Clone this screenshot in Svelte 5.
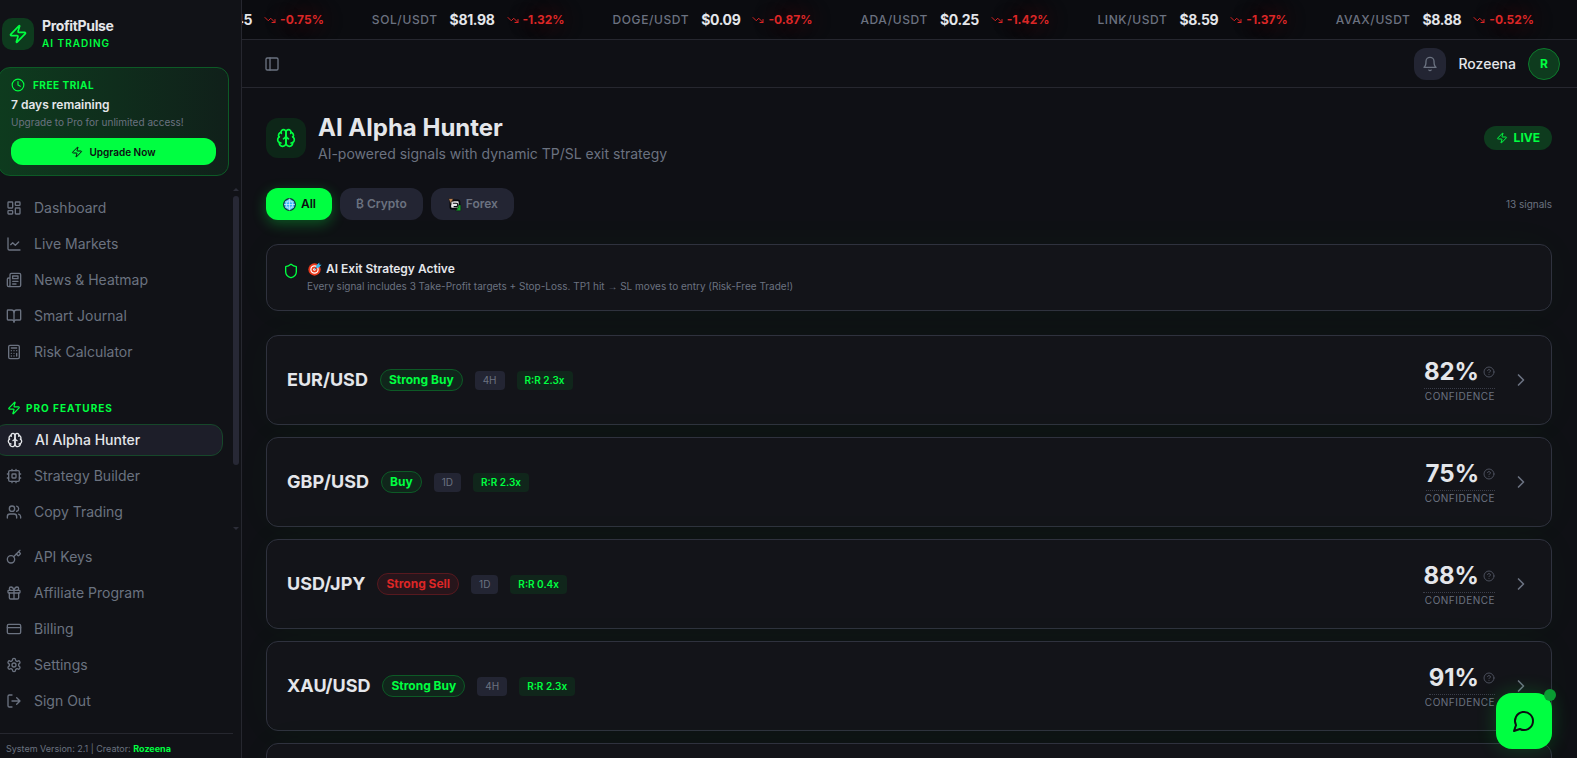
<script>
  const icons = {
    zap: '<path d="M4 14a1 1 0 0 1-.78-1.63l9.9-10.2a.5.5 0 0 1 .86.46l-1.92 6.02A1 1 0 0 0 13 10h7a1 1 0 0 1 .78 1.63l-9.9 10.2a.5.5 0 0 1-.86-.46l1.92-6.02A1 1 0 0 0 11 14z"/>',
    clock: '<circle cx="12" cy="12" r="10"/><path d="M12 6v6l4 2"/>',
    dashboard: '<rect width="7" height="9" x="3" y="3" rx="1"/><rect width="7" height="5" x="14" y="3" rx="1"/><rect width="7" height="9" x="14" y="12" rx="1"/><rect width="7" height="5" x="3" y="16" rx="1"/>',
    chart: '<path d="M3 3v16a2 2 0 0 0 2 2h16"/><path d="m19 9-5 5-4-4-3 3"/>',
    news: '<path d="M4 22h16a2 2 0 0 0 2-2V4a2 2 0 0 0-2-2H8a2 2 0 0 0-2 2v16a2 2 0 0 1-2 2Zm0 0a2 2 0 0 1-2-2v-9c0-1.1.9-2 2-2h2"/><path d="M18 14h-8"/><path d="M15 18h-5"/><path d="M10 6h8v4h-8V6Z"/>',
    book: '<path d="M12 7v14"/><path d="M3 18a1 1 0 0 1-1-1V4a1 1 0 0 1 1-1h5a4 4 0 0 1 4 4 4 4 0 0 1 4-4h5a1 1 0 0 1 1 1v13a1 1 0 0 1-1 1h-6a3 3 0 0 0-3 3 3 3 0 0 0-3-3z"/>',
    calc: '<rect width="16" height="20" x="4" y="2" rx="2"/><path d="M8 6h8M16 14v4M16 10h.01M12 10h.01M8 10h.01M12 14h.01M8 14h.01M12 18h.01M8 18h.01"/>',
    brain: '<path d="M12 5a3 3 0 1 0-5.997.125 4 4 0 0 0-2.526 5.77 4 4 0 0 0 .556 6.588A4 4 0 1 0 12 18Z"/><path d="M12 5a3 3 0 1 1 5.997.125 4 4 0 0 1 2.526 5.77 4 4 0 0 1-.556 6.588A4 4 0 1 1 12 18Z"/><path d="M15 13a4.5 4.5 0 0 1-3-4 4.5 4.5 0 0 1-3 4"/><path d="M17.599 6.5a3 3 0 0 0 .399-1.375M6.003 5.125A3 3 0 0 0 6.401 6.5M3.477 10.896a4 4 0 0 1 .585-.396M19.938 10.5a4 4 0 0 1 .585.396M6 18a4 4 0 0 1-1.967-.516M19.967 17.484A4 4 0 0 1 18 18"/>',
    cpu: '<rect width="16" height="16" x="4" y="4" rx="2"/><rect width="6" height="6" x="9" y="9" rx="1"/><path d="M15 2v2M15 20v2M2 15h2M2 9h2M20 15h2M20 9h2M9 2v2M9 20v2"/>',
    users: '<path d="M16 21v-2a4 4 0 0 0-4-4H6a4 4 0 0 0-4 4v2"/><circle cx="9" cy="7" r="4"/><path d="M22 21v-2a4 4 0 0 0-3-3.87M16 3.13a4 4 0 0 1 0 7.75"/>',
    key: '<path d="m15.5 7.5 2.3 2.3a1 1 0 0 0 1.4 0l2.1-2.1a1 1 0 0 0 0-1.4L19 4"/><path d="m21 2-9.6 9.6"/><circle cx="7.5" cy="15.5" r="5.5"/>',
    gift: '<rect x="3" y="8" width="18" height="4" rx="1"/><path d="M12 8v13M19 12v7a2 2 0 0 1-2 2H7a2 2 0 0 1-2-2v-7"/><path d="M7.5 8a2.5 2.5 0 0 1 0-5A4.8 8 0 0 1 12 8a4.8 8 0 0 1 4.5-5 2.5 2.5 0 0 1 0 5"/>',
    card: '<rect width="20" height="14" x="2" y="5" rx="2"/><path d="M2 10h20"/>',
    settings: '<path d="M12.22 2h-.44a2 2 0 0 0-2 2v.18a2 2 0 0 1-1 1.73l-.43.25a2 2 0 0 1-2 0l-.15-.08a2 2 0 0 0-2.73.73l-.22.38a2 2 0 0 0 .73 2.73l.15.1a2 2 0 0 1 1 1.72v.51a2 2 0 0 1-1 1.74l-.15.09a2 2 0 0 0-.73 2.73l.22.38a2 2 0 0 0 2.73.73l.15-.08a2 2 0 0 1 2 0l.43.25a2 2 0 0 1 1 1.73V20a2 2 0 0 0 2 2h.44a2 2 0 0 0 2-2v-.18a2 2 0 0 1 1-1.73l.43-.25a2 2 0 0 1 2 0l.15.08a2 2 0 0 0 2.73-.73l.22-.39a2 2 0 0 0-.73-2.73l-.15-.08a2 2 0 0 1-1-1.74v-.5a2 2 0 0 1 1-1.74l.15-.09a2 2 0 0 0 .73-2.73l-.22-.38a2 2 0 0 0-2.73-.73l-.15.08a2 2 0 0 1-2 0l-.43-.25a2 2 0 0 1-1-1.73V4a2 2 0 0 0-2-2z"/><circle cx="12" cy="12" r="3"/>',
    logout: '<path d="M9 21H5a2 2 0 0 1-2-2V5a2 2 0 0 1 2-2h4"/><path d="m16 17 5-5-5-5M21 12H9"/>',
    down: '<path d="m22 17-8.500-8.500-5 5L2 7"/><path d="M16 17h6v-6"/>',
    panel: '<rect width="18" height="18" x="3" y="3" rx="2"/><path d="M9 3v18"/>',
    bell: '<path d="M6 8a6 6 0 0 1 12 0c0 7 3 9 3 9H3s3-2 3-9M10.300 21a1.940 1.940 0 0 0 3.400 0"/>',
    shield: '<path d="M20 13c0 5-3.500 7.500-7.660 8.950a1 1 0 0 1-.67-.01C7.500 20.500 4 18 4 13V6a1 1 0 0 1 1-1c2 0 4.500-1.200 6.240-2.720a1.170 1.170 0 0 1 1.520 0C14.510 3.810 17 5 19 5a1 1 0 0 1 1 1z"/>',
    help: '<circle cx="12" cy="12" r="10"/><path d="M9.090 9a3 3 0 0 1 5.830 1c0 2-3 3-3 3M12 17h.01"/>',
    chevron: '<path d="m9 18 6-6-6-6"/>',
    chat: '<path d="M7.900 20A9 9 0 1 0 4 16.100L2 22Z"/>',
  };

  const mainNav = [
    ['dashboard', 'Dashboard'],
    ['chart', 'Live Markets'],
    ['news', 'News & Heatmap'],
    ['book', 'Smart Journal'],
    ['calc', 'Risk Calculator'],
  ];
  const proNav = [
    ['brain', 'AI Alpha Hunter', true],
    ['cpu', 'Strategy Builder'],
    ['users', 'Copy Trading'],
  ];
  const accountNav = [
    ['key', 'API Keys'],
    ['gift', 'Affiliate Program'],
    ['card', 'Billing'],
    ['settings', 'Settings'],
    ['logout', 'Sign Out'],
  ];
  const ticker = [
    ['BNB/USDT', '$589.45', '-0.75%'],
    ['SOL/USDT', '$81.98', '-1.32%'],
    ['DOGE/USDT', '$0.09', '-0.87%'],
    ['ADA/USDT', '$0.25', '-1.42%'],
    ['LINK/USDT', '$8.59', '-1.37%'],
    ['AVAX/USDT', '$8.88', '-0.52%'],
  ];
  const signals = [
    { pair: 'EUR/USD', action: 'Strong Buy', frame: '4H', ratio: '2.3x', confidence: 82 },
    { pair: 'GBP/USD', action: 'Buy', frame: '1D', ratio: '2.3x', confidence: 75 },
    { pair: 'USD/JPY', action: 'Strong Sell', frame: '1D', ratio: '0.4x', confidence: 88 },
    { pair: 'XAU/USD', action: 'Strong Buy', frame: '4H', ratio: '2.3x', confidence: 91 },
    { pair: 'BTC/USD', action: 'Buy', frame: '4H', ratio: '2.3x', confidence: 79 },
  ];
</script>

{#snippet icon(name, size = 16)}
  <svg class="icon" width={size} height={size} viewBox="0 0 24 24" aria-hidden="true">{@html icons[name]}</svg>
{/snippet}

{#snippet navList(items)}
  <ul>
    {#each items as [name, label, active]}
      <li><a class="nav-link" class:active href="#top">{@render icon(name)}<span>{label}</span></a></li>
    {/each}
  </ul>
{/snippet}

<div class="app">
  <aside>
    <div class="brand">
      <div class="logo">{@render icon('zap', 20)}</div>
      <div>
        <div class="brand-name">ProfitPulse</div>
        <div class="brand-sub">AI TRADING</div>
      </div>
    </div>
    <section class="trial">
      <div class="trial-tag">{@render icon('clock', 14)}<span>FREE TRIAL</span></div>
      <div class="trial-days">7 days remaining</div>
      <div class="trial-note">Upgrade to Pro for unlimited access!</div>
      <button class="upgrade">{@render icon('zap', 12)}Upgrade Now</button>
    </section>
    <div class="scroller">
      <nav>
        {@render navList(mainNav)}
        <h2>{@render icon('zap', 14)}PRO FEATURES</h2>
        {@render navList(proNav)}
      </nav>
      <div class="scrollbar" aria-hidden="true"><i class="up"></i><i class="thumb"></i><i class="dn"></i></div>
    </div>
    <nav class="account">{@render navList(accountNav)}</nav>
    <footer>System Version: 2.1 | Creator: <b>Rozeena</b></footer>
  </aside>

  <div class="content">
    <div class="ticker">
      {#each ticker as [symbol, price, change]}
        <div class="quote">
          <span class="symbol">{symbol}</span>
          <span class="price">{price}</span>
          <span class="change">{@render icon('down', 12)}{change}</span>
        </div>
      {/each}
    </div>

    <header>
      <button class="toggle" aria-label="Toggle sidebar">{@render icon('panel')}</button>
      <div class="user">
        <button class="bell" aria-label="Notifications">{@render icon('bell')}</button>
        <span class="user-name">Rozeena</span>
        <span class="avatar">R</span>
      </div>
    </header>

    <main>
      <div class="title-row">
        <div class="title-icon">{@render icon('brain', 20)}</div>
        <div class="titles">
          <h1>AI Alpha Hunter</h1>
          <p>AI-powered signals with dynamic TP/SL exit strategy</p>
        </div>
        <span class="live">{@render icon('zap', 12)}LIVE</span>
      </div>

      <div class="filters">
        <button class="tab on">
          <svg width="15" height="15" viewBox="-1 -1 18 18" aria-hidden="true">
            <circle cx="8" cy="8" r="7" fill="#38b6f5" stroke="#12313a" stroke-width="1.500" />
            <path d="M8 1.500v13M1.500 8h13M2.500 4.800h11M2.500 11.200h11M8 1.500c-5 4-5 9 0 13c5-4 5-9 0-13" fill="none" stroke="#d9f5ff" stroke-width="0.800" />
          </svg>
          All
        </button>
        <button class="tab">₿ Crypto</button>
        <button class="tab">
          <svg width="15" height="15" viewBox="-1 -1 18 18" aria-hidden="true">
            <rect x="3" y="3" width="11" height="10" rx="2" fill="#e8e8e8" stroke="#08090b" stroke-width="2" />
            <path d="M6 6.500h4a2 2 0 0 1 0 4H7" fill="none" stroke="#08090b" stroke-width="1.400" />
            <path d="M1 1h6L5 3l1.500 1.500H4V8z" fill="#c98a55" stroke="#08090b" stroke-width="0.500" />
            <path d="M15.500 15.500H9.500l2-2L10 12h2.500V8.500h3z" fill="#17a82d" stroke="#08090b" stroke-width="0.500" />
          </svg>
          Forex
        </button>
        <span class="count">13 signals</span>
      </div>

      <section class="notice">
        {@render icon('shield')}
        <div>
          <h3>
            <svg width="15" height="15" viewBox="-1 0 17 17" aria-hidden="true">
              <circle cx="7.500" cy="8.500" r="7" fill="#e9391c" />
              <circle cx="7.500" cy="8.500" r="4.800" fill="#fff" />
              <circle cx="7.500" cy="8.500" r="3.400" fill="#e9391c" />
              <circle cx="7.500" cy="8.500" r="1.500" fill="#fff" />
              <path d="m7.500 8.500 4-4" stroke="#1d6f9e" stroke-width="1.200" />
              <path d="M9.500 4 13 .5v2.500h2.500l-3.500 3.500H9.500z" fill="#35b8f2" />
            </svg>
            AI Exit Strategy Active
          </h3>
          <p>Every signal includes 3 Take-Profit targets + Stop-Loss. TP1 hit <span class="arrow">→</span> SL moves to entry (Risk-Free Trade!)</p>
        </div>
      </section>

      <div class="signals">
        {#each signals as s}
          <article class="signal">
            <span class="pair">{s.pair}</span>
            <span class="action" class:sell={s.action.includes('Sell')}>{s.action}</span>
            <span class="frame">{s.frame}</span>
            <span class="ratio">R:R {s.ratio}</span>
            <div class="confidence">
              <div class="score"><strong>{s.confidence}%</strong>{@render icon('help', 12)}</div>
              <span>CONFIDENCE</span>
            </div>
            {@render icon('chevron', 20)}
          </article>
        {/each}
      </div>
    </main>
  </div>

  <button class="chat" aria-label="Open chat">{@render icon('chat', 24)}<i></i></button>
</div>

<style>
  :global(body) {
    background: #0f1015;
    overflow: hidden;
  }
  .app {
    display: flex;
    height: 100vh;
    overflow: hidden;
    background: #0f1015;
    color: #e4e6ea;
    font-family: Inter, "Noto Sans", sans-serif;
    font-size: 14px;
    line-height: 20px;
  }
  .app *,
  .app {
    box-sizing: border-box;
  }
  button {
    border: 0;
    padding: 0;
    background: none;
    color: inherit;
    font: inherit;
    cursor: pointer;
  }
  h1, h2, h3, p, ul {
    margin: 0;
    padding: 0;
  }
  li {
    list-style: none;
  }
  .icon {
    flex: none;
    fill: none;
    stroke: currentColor;
    stroke-width: 2;
    stroke-linecap: round;
    stroke-linejoin: round;
  }

  aside {
    display: flex;
    flex: none;
    flex-direction: column;
    width: 242px;
    overflow: hidden;
    border-right: 1px solid #26272f;
    background: #111217;
  }
  .brand {
    display: flex;
    gap: 8px;
    align-items: center;
    padding: 16px 2px 0;
  }
  .logo {
    display: grid;
    flex: none;
    place-items: center;
    width: 32px;
    height: 32px;
    border-radius: 10px;
    background: #0e3b1e;
    color: #00ff41;
  }
  .brand-name {
    font-weight: 700;
    line-height: 20px;
    letter-spacing: -0.025em;
  }
  .brand-sub {
    color: #00ff41;
    font-size: 10px;
    font-weight: 600;
    line-height: 15px;
    letter-spacing: 0.1em;
  }
  .trial {
    display: flex;
    flex-direction: column;
    margin: 16px 12px 0 -2px;
    padding: 8px 12px 10px;
    border: 1px solid #0d5a26;
    border-radius: 12px;
    background: linear-gradient(90deg, #0e3b1e, #10201a);
  }
  .trial-tag {
    display: flex;
    gap: 8px;
    align-items: center;
    height: 18px;
    color: #00ff41;
    font-size: 10px;
    font-weight: 700;
    letter-spacing: 0.05em;
  }
  .trial-days {
    font-size: 12px;
    font-weight: 600;
    line-height: 22px;
  }
  .trial-note {
    color: #6b7280;
    font-size: 10px;
    line-height: 12px;
  }
  .upgrade {
    display: flex;
    gap: 6px;
    align-items: center;
    justify-content: center;
    height: 27px;
    margin-top: 10px;
    border-radius: 12px;
    background: #00ff41;
    color: #0c0d11;
    font-size: 10px;
    font-weight: 600;
  }
  .scroller {
    display: flex;
    flex: 1;
    min-height: 0;
    margin-top: 10px;
  }
  nav {
    flex: 1;
    margin-left: -6px;
    padding-top: 6px;
  }
  ul {
    display: flex;
    flex-direction: column;
    gap: 4px;
  }
  .nav-link {
    display: flex;
    gap: 12px;
    align-items: center;
    height: 32px;
    margin-right: 10px;
    padding: 0 12px;
    border-radius: 12px;
    color: #6b7280;
    text-decoration: none;
  }
  .nav-link.active {
    border: 1px solid #16472a;
    background: #1d1e29;
    color: #e4e6ea;
    font-weight: 500;
  }
  h2 {
    display: flex;
    gap: 5px;
    align-items: center;
    height: 32px;
    margin-top: 24px;
    padding: 0 13px;
    color: #00ff41;
    font-size: 10px;
    font-weight: 700;
    letter-spacing: 0.1em;
  }
  .scrollbar {
    display: flex;
    flex: none;
    flex-direction: column;
    align-items: center;
    width: 8px;
    padding: 2px 2px 0 0;
  }
  .scrollbar .up,
  .scrollbar .dn {
    border: 3px solid transparent;
  }
  .scrollbar .up {
    border-top: 0;
    border-bottom-color: #2c2d38;
  }
  .scrollbar .dn {
    margin: auto 0 3px;
    border-bottom: 0;
    border-top-color: #2c2d38;
  }
  .scrollbar .thumb {
    width: 6px;
    height: 78%;
    margin-top: 5px;
    border-radius: 3px;
    background: #272835;
  }
  .account {
    flex: none;
    padding: 8px 8px 16px 0;
  }
  footer {
    margin-right: 8px;
    padding: 8px 6px 2px;
    border-top: 1px solid #26272f;
    color: #6b7280;
    font-size: 9px;
    line-height: 14px;
  }
  footer b {
    color: #00ff41;
  }

  .content {
    display: flex;
    flex: 1;
    flex-direction: column;
    min-width: 0;
  }
  .ticker {
    display: flex;
    flex: none;
    gap: 48px;
    justify-content: flex-end;
    height: 40px;
    overflow: hidden;
    padding-right: 43px;
    border-bottom: 1px solid #26272f;
    background: #0b0c10;
  }
  .quote {
    display: flex;
    flex: none;
    gap: 12px;
    align-items: center;
  }
  .symbol {
    color: #6b7280;
    font-size: 12px;
    font-weight: 500;
    letter-spacing: 0.05em;
  }
  .price {
    font-weight: 700;
    letter-spacing: -0.025em;
  }
  .change {
    display: flex;
    gap: 4px;
    align-items: center;
    color: #dc2626;
    font-size: 12px;
    font-weight: 700;
    text-shadow: 0 0 20px rgba(220, 38, 38, 0.5);
  }
  header {
    display: flex;
    flex: none;
    align-items: center;
    justify-content: space-between;
    height: 48px;
    padding: 0 17px 0 22px;
    border-bottom: 1px solid #26272f;
  }
  .toggle {
    display: grid;
    color: #6b7280;
  }
  .user {
    display: flex;
    gap: 12px;
    align-items: center;
    font-weight: 500;
  }
  .bell {
    display: grid;
    place-items: center;
    width: 32px;
    height: 32px;
    border-radius: 12px;
    background: #232533;
    color: #6b7280;
  }
  .avatar {
    display: grid;
    place-items: center;
    width: 32px;
    height: 32px;
    border: 1px solid #0d7a2c;
    border-radius: 50%;
    background: #0e3b1e;
    color: #00ff41;
    font-size: 12px;
    font-weight: 700;
  }

  main {
    flex: 1;
    min-height: 0;
    overflow: hidden;
    padding: 24px 25px 0 24px;
  }
  .title-row {
    display: flex;
    gap: 12px;
    align-items: center;
  }
  .title-icon {
    display: grid;
    place-items: center;
    width: 40px;
    height: 40px;
    border-radius: 12px;
    background: #0d2618;
    color: #00ff41;
  }
  .titles {
    flex: 1;
  }
  h1 {
    font-size: 24px;
    font-weight: 700;
    line-height: 32px;
  }
  .titles p {
    color: #6b7280;
  }
  .live {
    display: flex;
    gap: 6px;
    align-items: center;
    height: 24px;
    padding: 0 12px;
    border-radius: 12px;
    background: #0e3b1e;
    color: #00ff41;
    font-size: 12px;
    font-weight: 700;
  }
  .filters {
    display: flex;
    gap: 8px;
    align-items: center;
    margin-top: 24px;
  }
  .tab {
    display: flex;
    gap: 4px;
    align-items: center;
    height: 32px;
    padding: 0 16px;
    border-radius: 12px;
    background: #232533;
    color: #6b7280;
    font-size: 12px;
    font-weight: 600;
  }
  .tab.on {
    background: #00ff41;
    box-shadow: 0 4px 14px rgba(0, 255, 65, 0.3);
    color: #0c0d11;
  }
  .count {
    margin-left: auto;
    color: #6b7280;
    font-size: 10px;
  }
  .notice,
  .signal {
    border: 1px solid #2f323e;
    border-radius: 12px;
    background: #131419;
    box-shadow: 0 0 40px rgba(0, 255, 65, 0.03);
  }
  .notice {
    display: flex;
    gap: 8px;
    height: 67px;
    margin-top: 24px;
    padding: 14px 16px;
    color: #00ff41;
  }
  .notice > :global(.icon) {
    margin-top: 4px;
  }
  h3 {
    display: flex;
    gap: 4px;
    align-items: center;
    color: #e4e6ea;
    font-size: 12px;
    font-weight: 600;
    line-height: 20px;
  }
  .notice p {
    color: #6b7280;
    font-size: 10px;
    line-height: 15px;
  }
  .arrow {
    font-family: "Liberation Sans", sans-serif;
  }
  .signals {
    display: flex;
    flex-direction: column;
    gap: 12px;
    margin-top: 24px;
  }
  .signal {
    display: flex;
    flex: none;
    gap: 12px;
    align-items: center;
    height: 90px;
    padding: 0 20px;
    color: #6b7280;
  }
  .pair {
    color: #e4e6ea;
    font-size: 18px;
    font-weight: 700;
  }
  .action {
    padding: 0 8px;
    border: 1px solid #0d5a26;
    border-radius: 11px;
    background: #10261b;
    color: #00ff41;
    font-size: 12px;
    font-weight: 700;
  }
  .action.sell {
    border-color: #57191f;
    background: #27151b;
    color: #dc2626;
  }
  .frame,
  .ratio {
    padding: 0 8px;
    border-radius: 4px;
    background: #232533;
    font-size: 10px;
    line-height: 19px;
  }
  .ratio {
    background: #10261b;
    color: #00ff41;
    font-weight: 600;
  }
  .confidence {
    display: flex;
    flex-direction: column;
    align-items: flex-end;
    margin: 0 4px 0 auto;
    font-size: 10px;
    line-height: 15px;
    letter-spacing: 0.05em;
  }
  .score {
    display: flex;
    gap: 4px;
    align-items: center;
    border-bottom: 1px dotted #3a3d49;
    color: #4b4f5c;
    letter-spacing: 0;
  }
  .score strong {
    color: #e4e6ea;
    font-size: 24px;
    line-height: 32px;
  }
  .chat {
    position: fixed;
    right: 25px;
    bottom: 9px;
    display: grid;
    place-items: center;
    width: 56px;
    height: 56px;
    border-radius: 16px;
    background: #00ff41;
    box-shadow: 0 0 20px rgba(0, 255, 65, 0.2);
    color: #0c0d11;
  }
  .chat i {
    position: absolute;
    top: -4px;
    right: -4px;
    z-index: -1;
    width: 12px;
    height: 12px;
    border-radius: 50%;
    background: #0a9a32;
  }
</style>
